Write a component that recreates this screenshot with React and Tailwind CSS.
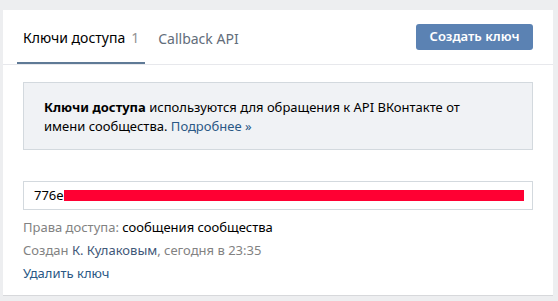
export default function App() {
  return (
    <div className="w-[558px] h-[301px] bg-[#edeef0] pt-[10px] pl-[3px] pr-[5px] font-['Noto_Sans','Helvetica_Neue',Arial,sans-serif] text-[13px] text-black">
      <div className="bg-white h-[286px] border-b border-[#d7d8db]">
        {/* Tabs */}
        <div className="h-[55px] border-b border-[#e7e8ec] flex items-center justify-between pl-[14px] pr-[20px]">
          <div className="flex h-full">
            <div className="h-full flex items-center px-[6px] border-b-2 border-[#5f7a96] text-[14px] pt-[2px]">
              Ключи доступа <span className="text-[#939393] ml-[6px]">1</span>
            </div>
            <div className="h-full flex items-center px-[13px] text-[14px] text-[#626d7a] pt-[2px]">
              Callback API
            </div>
          </div>
          <button className="w-[117px] h-[26px] rounded-[3px] bg-[#5b82b3] text-white text-[13px] font-semibold">
            Создать ключ
          </button>
        </div>

        <div className="px-[20px] pt-[17px]">
          <div className="bg-[#f0f2f5] border border-[#d3d9de] h-[68px] pl-[20px] pr-[40px] pt-[15px] leading-[19px]">
            <b className="font-bold">Ключи доступа</b> используются для обращения к API ВКонтакте от имени сообщества.{" "}
            <a className="text-[#2a5885]">Подробнее »</a>
          </div>

          <div className="mt-[31px] border border-[#d3d9de] h-[29px] flex items-center pl-[10px] pr-[8px]">
            <span>776e</span>
            <div className="flex-1 h-[11px] bg-[#ff0033]" />
          </div>

          <div className="mt-[6px] leading-[23px]">
            <div>
              <span className="text-[#828282]">Права доступа:</span> сообщения сообщества
            </div>
            <div className="text-[#828282]">
              Создан <a className="text-[#3f5878]">К. Кулаковым</a>, сегодня в 23:35
            </div>
            <div className="text-[#2a5885]">Удалить ключ</div>
          </div>
        </div>
      </div>
    </div>
  );
}
